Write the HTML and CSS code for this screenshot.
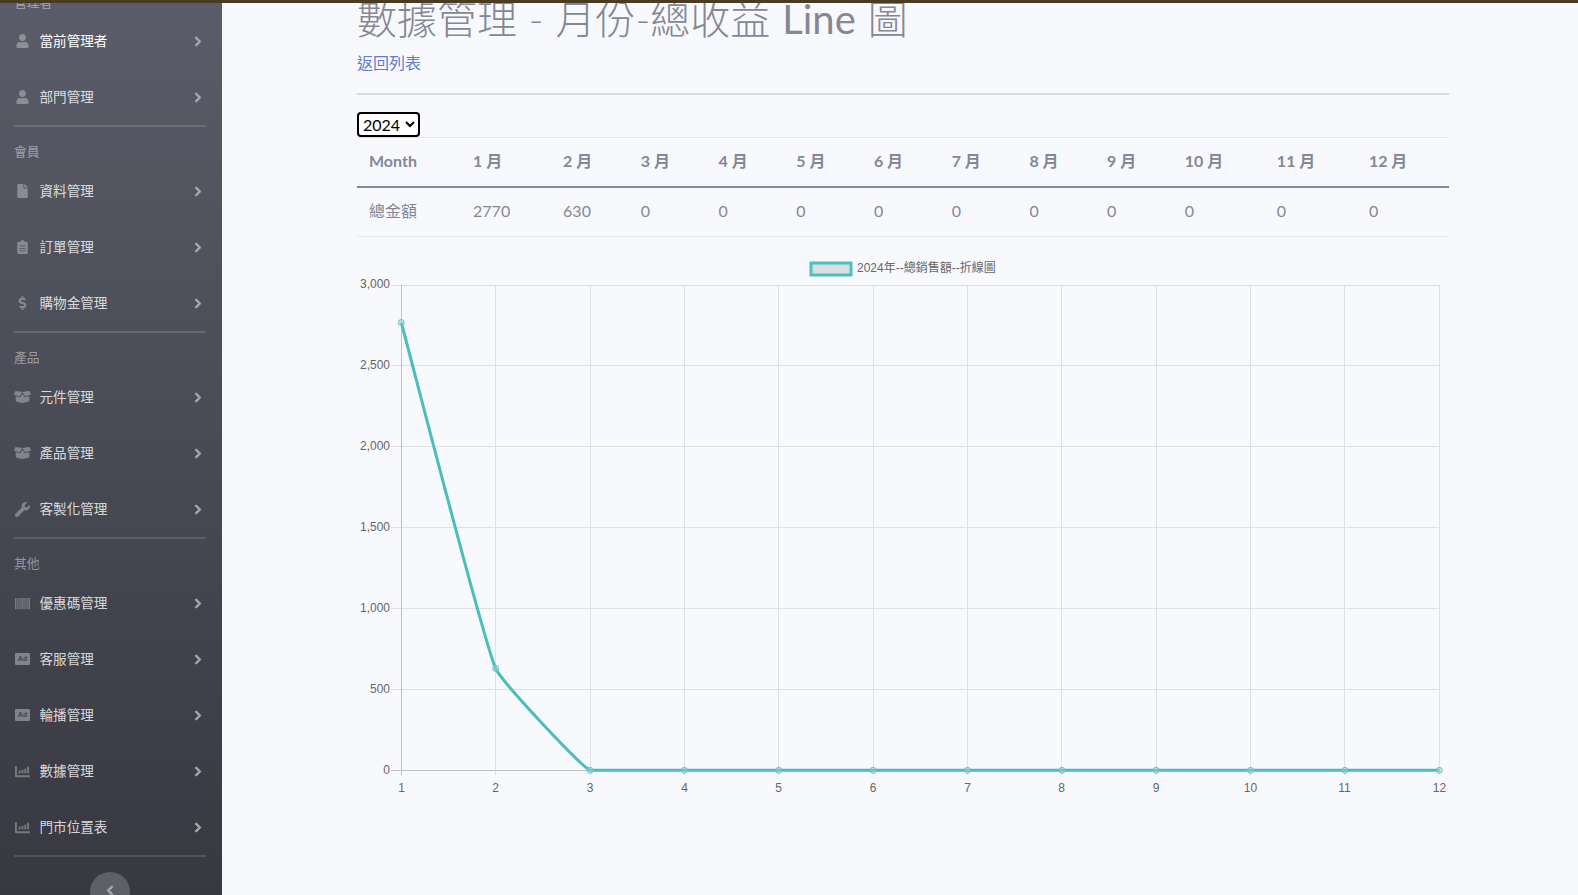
FILE: index.html
```html
<!DOCTYPE html>
<html lang="zh-Hant">
<head>
<meta charset="utf-8">
<title>數據管理 - 月份-總收益 Line 圖</title>
<link rel="stylesheet" href="styles.css">
</head>
<body>
<svg class="defs" width="0" height="0" aria-hidden="true">
  <symbol id="i-user" viewBox="0 0 448 512"><path d="M224 256c70.7 0 128-57.3 128-128S294.7 0 224 0 96 57.3 96 128s57.3 128 128 128zm89.6 32h-16.7c-22.2 10.2-46.9 16-72.9 16s-50.6-5.8-72.9-16h-16.7C60.2 288 0 348.2 0 422.4V464c0 26.5 21.5 48 48 48h352c26.5 0 48-21.5 48-48v-41.6c0-74.2-60.2-134.4-134.4-134.4z"/></symbol>
  <symbol id="i-file" viewBox="0 0 384 512"><path d="M224 136V0H24C10.7 0 0 10.7 0 24v464c0 13.3 10.7 24 24 24h336c13.3 0 24-10.7 24-24V160H248c-13.2 0-24-10.8-24-24zm160-14.1v6.1H256V0h6.1c6.4 0 12.5 2.5 17 7l97.9 98c4.5 4.5 7 10.6 7 16.9z"/></symbol>
  <symbol id="i-clip" viewBox="0 0 384 512"><path fill-rule="evenodd" d="M48 64h80C128 29 156 0 192 0s64 29 64 64h80c26.500 0 48 21.500 48 48v352c0 26.500-21.500 48-48 48H48c-26.500 0-48-21.500-48-48V112c0-26.500 21.500-48 48-48zM80 200v32h224v-32zM80 290v32h224v-32zM80 380v32h224v-32z"/></symbol>
  <symbol id="i-dollar" viewBox="0 0 288 512"><path d="M209.2 233.4l-108-31.6C88.7 198.2 80 186.5 80 173.5c0-16.3 13.2-29.5 29.5-29.5h66.3c12.2 0 24.2 3.7 34.2 10.5 6.1 4.1 14.3 3.1 19.5-2l34.8-34c7.1-6.9 6.1-18.4-1.8-24.5C238 74.8 207.4 64.1 176 64V16c0-8.8-7.2-16-16-16h-32c-8.8 0-16 7.2-16 16v48h-2.5C45.8 64-5.4 118.7.5 183.6c4.2 46.1 39.4 83.6 83.8 96.6l102.5 30c12.5 3.7 21.2 15.3 21.2 28.3 0 16.3-13.2 29.5-29.5 29.5h-66.3C100 368 88 364.3 78 357.5c-6.1-4.1-14.3-3.1-19.5 2l-34.8 34c-7.1 6.9-6.1 18.4 1.8 24.5 24.5 19.2 55.1 29.9 86.5 30v48c0 8.8 7.2 16 16 16h32c8.8 0 16-7.2 16-16v-48.2c46.6-.9 90.3-28.6 105.7-72.7 21.5-61.6-14.6-124.8-72.5-141.7z"/></symbol>
  <symbol id="i-box" viewBox="0 0 640 512"><path d="M425.7 256c-16.9 0-32.8-9-41.4-23.4L320 126l-64.200 106.600c-8.700 14.500-24.600 23.500-41.500 23.500-4.500 0-9-.6-13.300-1.900L64 215v178c0 14.700 10 27.500 24.200 31l216.200 54.100c10.200 2.500 20.900 2.500 31 0L551.800 424c14.200-3.600 24.200-16.400 24.200-31V215l-137 39.100c-4.300 1.300-8.800 1.900-13.300 1.900zm212.600-112.200L586.800 41c-3.100-6.200-9.800-9.800-16.700-8.900L320 64l91.700 152.100c3.800 6.300 11.400 9.300 18.500 7.300l197.900-56.500c9.900-2.900 14.700-13.900 10.200-23.100zM53.200 41L1.700 143.800c-4.600 9.200.3 20.200 10.100 23l197.900 56.500c7.100 2 14.700-1 18.500-7.300L320 64 69.800 32.100c-6.900-.8-13.500 2.700-16.600 8.900z"/></symbol>
  <symbol id="i-wrench" viewBox="0 0 512 512"><path d="M507.730 109.100c-2.240-9.030-13.540-12.090-20.120-5.510l-74.360 74.360-67.880-11.310-11.310-67.880 74.360-74.360c6.620-6.620 3.430-17.900-5.660-20.160-47.380-11.740-99.550.91-136.580 37.930-39.640 39.640-50.550 97.100-34.050 147.200L18.740 402.760c-24.990 24.990-24.990 65.510 0 90.500 24.990 24.990 65.510 24.990 90.500 0l213.210-213.210c50.120 16.710 107.470 5.680 147.370-34.220 37.070-37.070 49.700-89.320 37.910-136.730z"/></symbol>
  <symbol id="i-barcode" viewBox="0 0 512 448"><path d="M0 32h32v384H0zM48 32h16v384H48zM80 32h32v384H80zM128 32h16v384h-16zM160 32h32v384h-32zM208 32h16v384h-16zM240 32h32v384h-32zM288 32h16v384h-16zM320 32h32v384h-32zM368 32h16v384h-16zM400 32h32v384h-32zM448 32h16v384h-16zM480 32h32v384h-32z"/></symbol>
  <symbol id="i-chart" viewBox="0 0 512 512"><path d="M332.800 320h38.400c6.400 0 12.800-6.400 12.800-12.800V172.800c0-6.400-6.400-12.800-12.800-12.800h-38.400c-6.400 0-12.800 6.400-12.800 12.800v134.400c0 6.400 6.400 12.800 12.800 12.800zm96 0h38.400c6.400 0 12.800-6.400 12.800-12.800V108.800c0-6.400-6.400-12.800-12.800-12.800h-38.400c-6.400 0-12.800 6.400-12.800 12.800v198.400c0 6.400 6.400 12.800 12.800 12.800zm-288 0h38.400c6.400 0 12.800-6.400 12.800-12.800v-70.400c0-6.400-6.400-12.800-12.800-12.800h-38.400c-6.400 0-12.800 6.400-12.800 12.800v70.400c0 6.400 6.400 12.800 12.800 12.800zm96 0h38.400c6.400 0 12.800-6.400 12.800-12.800V204.800c0-6.400-6.400-12.800-12.800-12.800h-38.400c-6.400 0-12.800 6.400-12.800 12.800v102.400c0 6.400 6.400 12.800 12.800 12.800zM496 384H64V80c0-8.840-7.160-16-16-16H16C7.160 64 0 71.160 0 80v336c0 17.670 14.330 32 32 32h464c8.840 0 16-7.160 16-16v-32c0-8.840-7.160-16-16-16z"/></symbol>
  <symbol id="i-chev" viewBox="0 0 320 512"><path d="M285.476 272.971L91.132 467.314c-9.373 9.373-24.569 9.373-33.941 0l-22.667-22.667c-9.357-9.357-9.375-24.522-.04-33.901L188.505 256 34.484 101.255c-9.335-9.379-9.317-24.544.04-33.901l22.667-22.667c9.373-9.373 24.569-9.373 33.941 0L285.475 239.030c9.373 9.372 9.373 24.568.001 33.941z"/></symbol>
</svg>

<div class="topbar"></div>

<aside class="sidebar">
  <div class="side-heading">管理者</div>
  <a class="nav-item active"><span class="ico"><svg class="i13"><use href="#i-user"/></svg></span><span class="label">當前管理者</span><svg class="chev"><use href="#i-chev"/></svg></a>
  <a class="nav-item"><span class="ico"><svg class="i13"><use href="#i-user"/></svg></span><span class="label">部門管理</span><svg class="chev"><use href="#i-chev"/></svg></a>
  <hr class="side-divider">
  <div class="side-heading">會員</div>
  <a class="nav-item"><span class="ico"><svg class="i13"><use href="#i-file"/></svg></span><span class="label">資料管理</span><svg class="chev"><use href="#i-chev"/></svg></a>
  <a class="nav-item"><span class="ico"><svg class="i13"><use href="#i-clip"/></svg></span><span class="label">訂單管理</span><svg class="chev"><use href="#i-chev"/></svg></a>
  <a class="nav-item"><span class="ico"><svg class="i13"><use href="#i-dollar"/></svg></span><span class="label">購物金管理</span><svg class="chev"><use href="#i-chev"/></svg></a>
  <hr class="side-divider">
  <div class="side-heading">產品</div>
  <a class="nav-item"><span class="ico"><svg class="i17"><use href="#i-box"/></svg></span><span class="label">元件管理</span><svg class="chev"><use href="#i-chev"/></svg></a>
  <a class="nav-item"><span class="ico"><svg class="i17"><use href="#i-box"/></svg></span><span class="label">產品管理</span><svg class="chev"><use href="#i-chev"/></svg></a>
  <a class="nav-item"><span class="ico"><svg class="i15"><use href="#i-wrench"/></svg></span><span class="label">客製化管理</span><svg class="chev"><use href="#i-chev"/></svg></a>
  <hr class="side-divider">
  <div class="side-heading">其他</div>
  <a class="nav-item"><span class="ico"><svg class="i15"><use href="#i-barcode"/></svg></span><span class="label">優惠碼管理</span><svg class="chev"><use href="#i-chev"/></svg></a>
  <a class="nav-item"><span class="ico"><span class="ad">Ad</span></span><span class="label">客服管理</span><svg class="chev"><use href="#i-chev"/></svg></a>
  <a class="nav-item"><span class="ico"><span class="ad">Ad</span></span><span class="label">輪播管理</span><svg class="chev"><use href="#i-chev"/></svg></a>
  <a class="nav-item"><span class="ico"><svg class="i15"><use href="#i-chart"/></svg></span><span class="label">數據管理</span><svg class="chev"><use href="#i-chev"/></svg></a>
  <a class="nav-item"><span class="ico"><svg class="i15"><use href="#i-chart"/></svg></span><span class="label">門市位置表</span><svg class="chev"><use href="#i-chev"/></svg></a>
  <hr class="side-divider last">
  <button class="toggle" type="button" aria-label="收合"><svg class="chev flip"><use href="#i-chev"/></svg></button>
</aside>

<main class="main">
  <h1 class="title">數據管理 - 月份-總收益 <span class="latin">Line</span> 圖</h1>
  <a class="back" href="#">返回列表</a>
  <hr class="rule">
  <select class="year"><option>2024</option><option>2023</option></select>
  <table class="data">
    <colgroup>
      <col class="w104"><col class="w90"><col class="w78"><col class="w78"><col class="w78"><col class="w78"><col class="w78"><col class="w78"><col class="w78"><col class="w78"><col class="w92"><col class="w92"><col class="w92">
    </colgroup>
    <thead>
      <tr><th>Month</th><th>1 月</th><th>2 月</th><th>3 月</th><th>4 月</th><th>5 月</th><th>6 月</th><th>7 月</th><th>8 月</th><th>9 月</th><th>10 月</th><th>11 月</th><th>12 月</th></tr>
    </thead>
    <tbody>
      <tr><td>總金額</td><td>2770</td><td>630</td><td>0</td><td>0</td><td>0</td><td>0</td><td>0</td><td>0</td><td>0</td><td>0</td><td>0</td><td>0</td></tr>
    </tbody>
  </table>
  <svg class="chart" viewBox="357 237 1092 583" width="1092" height="583">
    <rect class="legend-box" x="811" y="263" width="40" height="12"/>
    <text class="lbl" x="857" y="272">2024年--總銷售額--折線圖</text>
    <g class="grid">
      <path d="M495.500 285V775M590.500 285V775M684.500 285V775M778.500 285V775M873.500 285V775M967.500 285V775M1061.500 285V775M1156.500 285V775M1250.500 285V775M1344.500 285V775M1439.500 285V775"/>
      <path d="M391 285.500H1440M391 365.500H1440M391 446.500H1440M391 527.500H1440M391 608.500H1440M391 689.500H1440"/>
    </g>
    <g class="axis"><path d="M401.500 285V775M391 770.500H1440"/></g>
    <g class="lbl end">
      <text x="390" y="288">3,000</text><text x="390" y="369">2,500</text><text x="390" y="450">2,000</text><text x="390" y="531">1,500</text><text x="390" y="612">1,000</text><text x="390" y="693">500</text><text x="390" y="774">0</text>
    </g>
    <g class="lbl mid">
      <text x="401.500" y="792">1</text><text x="495.500" y="792">2</text><text x="590" y="792">3</text><text x="684.500" y="792">4</text><text x="778.500" y="792">5</text><text x="873" y="792">6</text><text x="967.500" y="792">7</text><text x="1061.500" y="792">8</text><text x="1156" y="792">9</text><text x="1250.500" y="792">10</text><text x="1344.500" y="792">11</text><text x="1439.500" y="792">12</text>
    </g>
    <path class="line" d="M401.300 322.500C410.700 357.100 482 636.100 495.600 668.400C500.900 680.900 578.800 764.200 590 770.300C597.600 770.300 684.400 770.300 684.400 770.300H1439.300"/>
    <g class="pts">
      <circle cx="401.300" cy="322.500" r="3"/><circle cx="495.600" cy="668.400" r="3"/><circle cx="590" cy="770.300" r="3"/><circle cx="684.400" cy="770.300" r="3"/><circle cx="778.700" cy="770.300" r="3"/><circle cx="873.100" cy="770.300" r="3"/><circle cx="967.500" cy="770.300" r="3"/><circle cx="1061.800" cy="770.300" r="3"/><circle cx="1156.200" cy="770.300" r="3"/><circle cx="1250.500" cy="770.300" r="3"/><circle cx="1344.900" cy="770.300" r="3"/><circle cx="1439.300" cy="770.300" r="3"/>
    </g>
  </svg>
</main>
</body>
</html>
```
FILE: styles.css
```css
* { box-sizing: border-box; }
html, body { height: 100%; }
body {
  margin: 0;
  display: flex;
  height: 100vh;
  overflow: hidden;
  background: #f8f9fc;
  color: #858796;
  font-family: Lato, "Noto Sans CJK TC", "Noto Sans", sans-serif;
  font-size: 16px;
}
.defs { position: absolute; }
.topbar {
  position: absolute;
  top: 0; left: 0; right: 0;
  height: 3px;
  background: #483c22;
  z-index: 5;
}
.sidebar {
  flex: 0 0 222px;
  width: 222px;
  height: 100%;
  overflow: hidden;
  background: linear-gradient(180deg, #5a5c69 0%, #373840 100%);
  display: flex;
  flex-direction: column;
}
.side-heading {
  height: 36px;
  flex: none;
  padding: 16px 0 0 14px;
  font-size: 12.800px;
  line-height: 17px;
  color: rgba(255, 255, 255, .45);
}
.side-heading:first-child { height: 35px; margin-top: -22px; }
.nav-item {
  flex: none;
  height: 56px;
  display: flex;
  align-items: center;
  padding: 0 20px 0 14px;
  color: rgba(255, 255, 255, .8);
  font-size: 13.600px;
}
.nav-item.active { color: #fff; }
.ico {
  width: 17px;
  margin-right: 8.500px;
  display: flex;
  justify-content: center;
  fill: rgba(255, 255, 255, .32);
  flex: none;
}
.i13 { width: 13px; height: 14px; }
.i15 { width: 15px; height: 15px; }
.i17 { width: 17px; height: 14px; }
.ad {
  width: 15px;
  height: 12px;
  border-radius: 1px;
  background: rgba(255, 255, 255, .35);
  color: #44454f;
  font: bold 7px/12px "Liberation Sans", sans-serif;
  text-align: center;
}
.label { flex: 1; padding-bottom: 2px; }
.chev {
  width: 8px;
  height: 11px;
  fill: #a9aab0;
  stroke: #a9aab0;
  stroke-width: 36;
  flex: none;
}
.flip { transform: scaleX(-1); }
.side-divider {
  flex: none;
  height: 2px;
  width: 192px;
  margin: 0 0 0 14px;
  border: 0;
  background: rgba(255, 255, 255, .13);
}
.side-divider.last { margin-bottom: 15px; }
.toggle {
  flex: none;
  width: 40px;
  height: 40px;
  align-self: flex-start;
  margin-left: 90px;
  border: 0;
  padding: 0 0 3px;
  border-radius: 50%;
  background: rgba(255, 255, 255, .2);
  display: flex;
  align-items: center;
  justify-content: center;
}
.main {
  flex: 1;
  min-width: 0;
  padding: 0 129px 0 135px;
  display: block;
}
.title {
  margin: -5px 0 0;
  font-size: 40px;
  line-height: 48px;
  font-weight: 300;
  word-spacing: 1px;
  color: #858796;
}
.latin { font-weight: 400; }
.back {
  display: block;
  margin-top: 8px;
  line-height: 24px;
  color: #5f7bc9;
  text-decoration: none;
}
.rule {
  height: 2px;
  margin: 18px 0 17px;
  border: 0;
  background: #d9dae0;
}
.year {
  display: block;
  width: 63px;
  height: 25px;
  border: 2px solid #000;
  border-radius: 4px;
  background: #fff;
  color: #000;
  font: 16px Lato, sans-serif;
  padding: 0 0 3px;
}
.data {
  width: 100%;
  table-layout: fixed;
  border-collapse: collapse;
  color: #858796;
}
.w104 { width: 104px; }
.w90 { width: 90px; }
.w78 { width: 77.700px; }
.w92 { width: 92px; }
.data th, .data td {
  padding: 11px 12px 13px;
  text-align: left;
  line-height: 24px;
  border-top: 1px solid #e3e6f0;
}
.data th { border-bottom: 2px solid #858796; font-weight: 700; }
.data td { border-top: 0; border-bottom: 1px solid #e3e6f0; }
.chart { display: block; }
.lbl text, text.lbl {
  font-family: "Liberation Sans", "Noto Sans CJK TC", sans-serif;
  font-size: 12px;
  fill: #666;
}
.end text { text-anchor: end; }
.mid text { text-anchor: middle; }
.legend-box { fill: #dcdfdf; stroke: #4bc0c0; stroke-width: 3; }
.grid path { fill: none; stroke: #dfe0e4; stroke-width: 1; }
.axis path { fill: none; stroke: #c0c1c5; stroke-width: 1; }
.line { fill: none; stroke: #4bbdba; stroke-width: 3; }
.pts circle { fill: rgba(150, 210, 210, .5); stroke: #6fc4c2; stroke-width: 1; }
```
